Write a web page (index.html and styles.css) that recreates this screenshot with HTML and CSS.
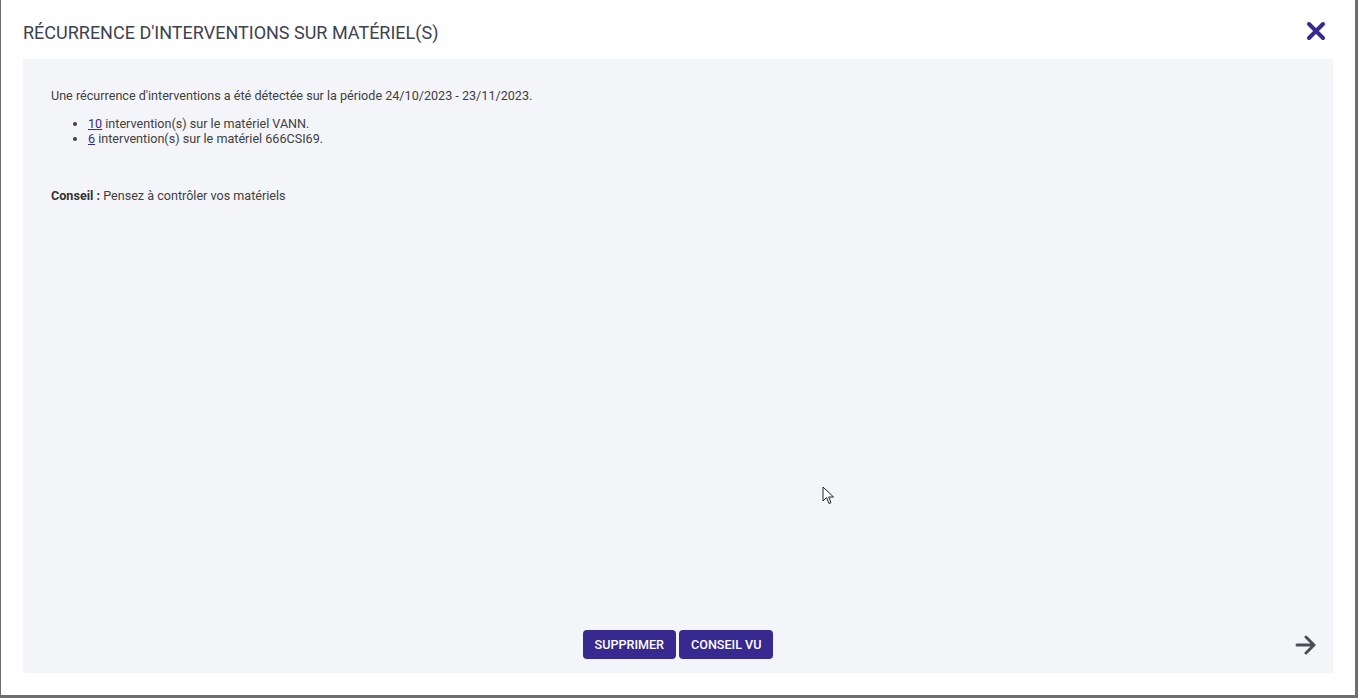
FILE: index.html
```html
<!DOCTYPE html>
<html lang="fr">
<head>
    <meta charset="UTF-8">
    <title>Récurrence d'interventions</title>
    <link rel="stylesheet" href="styles.css">
</head>
<body>
    <div class="dialog">
        <div class="dialog-header">
            <h1 class="dialog-title">RÉCURRENCE D'INTERVENTIONS SUR MATÉRIEL(S)</h1>
            <button class="close" aria-label="Fermer">
                <svg width="20" height="20" viewBox="0 0 20 20">
                    <path d="M3 3 L17 17 M17 3 L3 17" stroke="#37298f" stroke-width="4" stroke-linecap="round"/>
                </svg>
            </button>
        </div>

        <div class="panel">
            <div class="panel-body">
                <p>Une récurrence d'interventions a été détectée sur la période 24/10/2023 - 23/11/2023.</p>
                <ul class="list">
                    <li><a href="#">10</a> intervention(s) sur le matériel VANN.</li>
                    <li><a href="#">6</a> intervention(s) sur le matériel 666CSI69.</li>
                </ul>
                <p class="advice"><strong>Conseil :</strong> Pensez à contrôler vos matériels</p>
            </div>
            <div class="panel-footer">
                <div class="buttons">
                    <button class="btn">SUPPRIMER</button>
                    <button class="btn">CONSEIL VU</button>
                </div>
                <button class="next" aria-label="Suivant">
                    <svg width="22" height="20" viewBox="0 0 22 20">
                        <path d="M2 10 H19 M11 2 L19 10 L11 18" stroke="#4a4e57" stroke-width="3" fill="none" stroke-linecap="round" stroke-linejoin="round"/>
                    </svg>
                </button>
            </div>
        </div>

        <!-- pointeur de la souris sur la capture -->
        <svg class="cursor" width="14" height="20" viewBox="0 0 14 20">
            <path d="M1 1 L1 15 L4.5 11.5 L7 17.5 L9 16.6 L6.6 11 L11.5 11 Z" fill="#fff" stroke="#222" stroke-width="1" stroke-linejoin="round"/>
        </svg>
    </div>
</body>
</html>
```

FILE: styles.css
```css
* {
    margin: 0;
    padding: 0;
    box-sizing: border-box;
}

body {
    background: #6d6d6d;
    font-family: Roboto, "Liberation Sans", Arial, sans-serif;
    height: 698px;
    overflow: hidden;
}

.dialog {
    position: relative;
    margin-left: 1px;
    width: 1354px;
    height: 695px;
    background: #fff;
    display: flex;
    flex-direction: column;
    padding: 0 22px 22px;
}

.dialog-header {
    height: 59px;
    display: flex;
    align-items: center;
    justify-content: space-between;
    padding-top: 6px;
}

.dialog-title {
    font-size: 18px;
    font-weight: 400;
    color: #3d4250;
}

.close {
    background: none;
    border: none;
    width: 20px;
    height: 20px;
    margin-right: 7px;
    margin-top: -3px;
    display: flex;
}

.panel {
    flex: 1;
    background: #f4f5f9;
    display: flex;
    flex-direction: column;
    padding: 29px 28px 14px;
}

.panel-body {
    flex: 1;
    font-size: 12.6px;
    line-height: 15px;
    color: #404040;
}

.list {
    margin: 13px 0 0 37px;
}

.list a {
    color: #37298f;
    text-decoration: underline;
}

.advice {
    margin-top: 42px;
}

.advice strong {
    color: #333;
}

.panel-footer {
    position: relative;
    display: flex;
    justify-content: center;
    align-items: center;
}

.buttons {
    display: flex;
    gap: 3px;
}

.btn {
    background: #37298f;
    color: #fff;
    border: none;
    border-radius: 4px;
    height: 29px;
    padding: 0 12px;
    font-family: Roboto, "Liberation Sans", Arial, sans-serif;
    font-size: 12.6px;
    font-weight: 500;
}

.next {
    position: absolute;
    right: -12px;
    top: 5px;
    background: none;
    border: none;
    display: flex;
}

.cursor {
    position: absolute;
    left: 821px;
    top: 486px;
}
```
